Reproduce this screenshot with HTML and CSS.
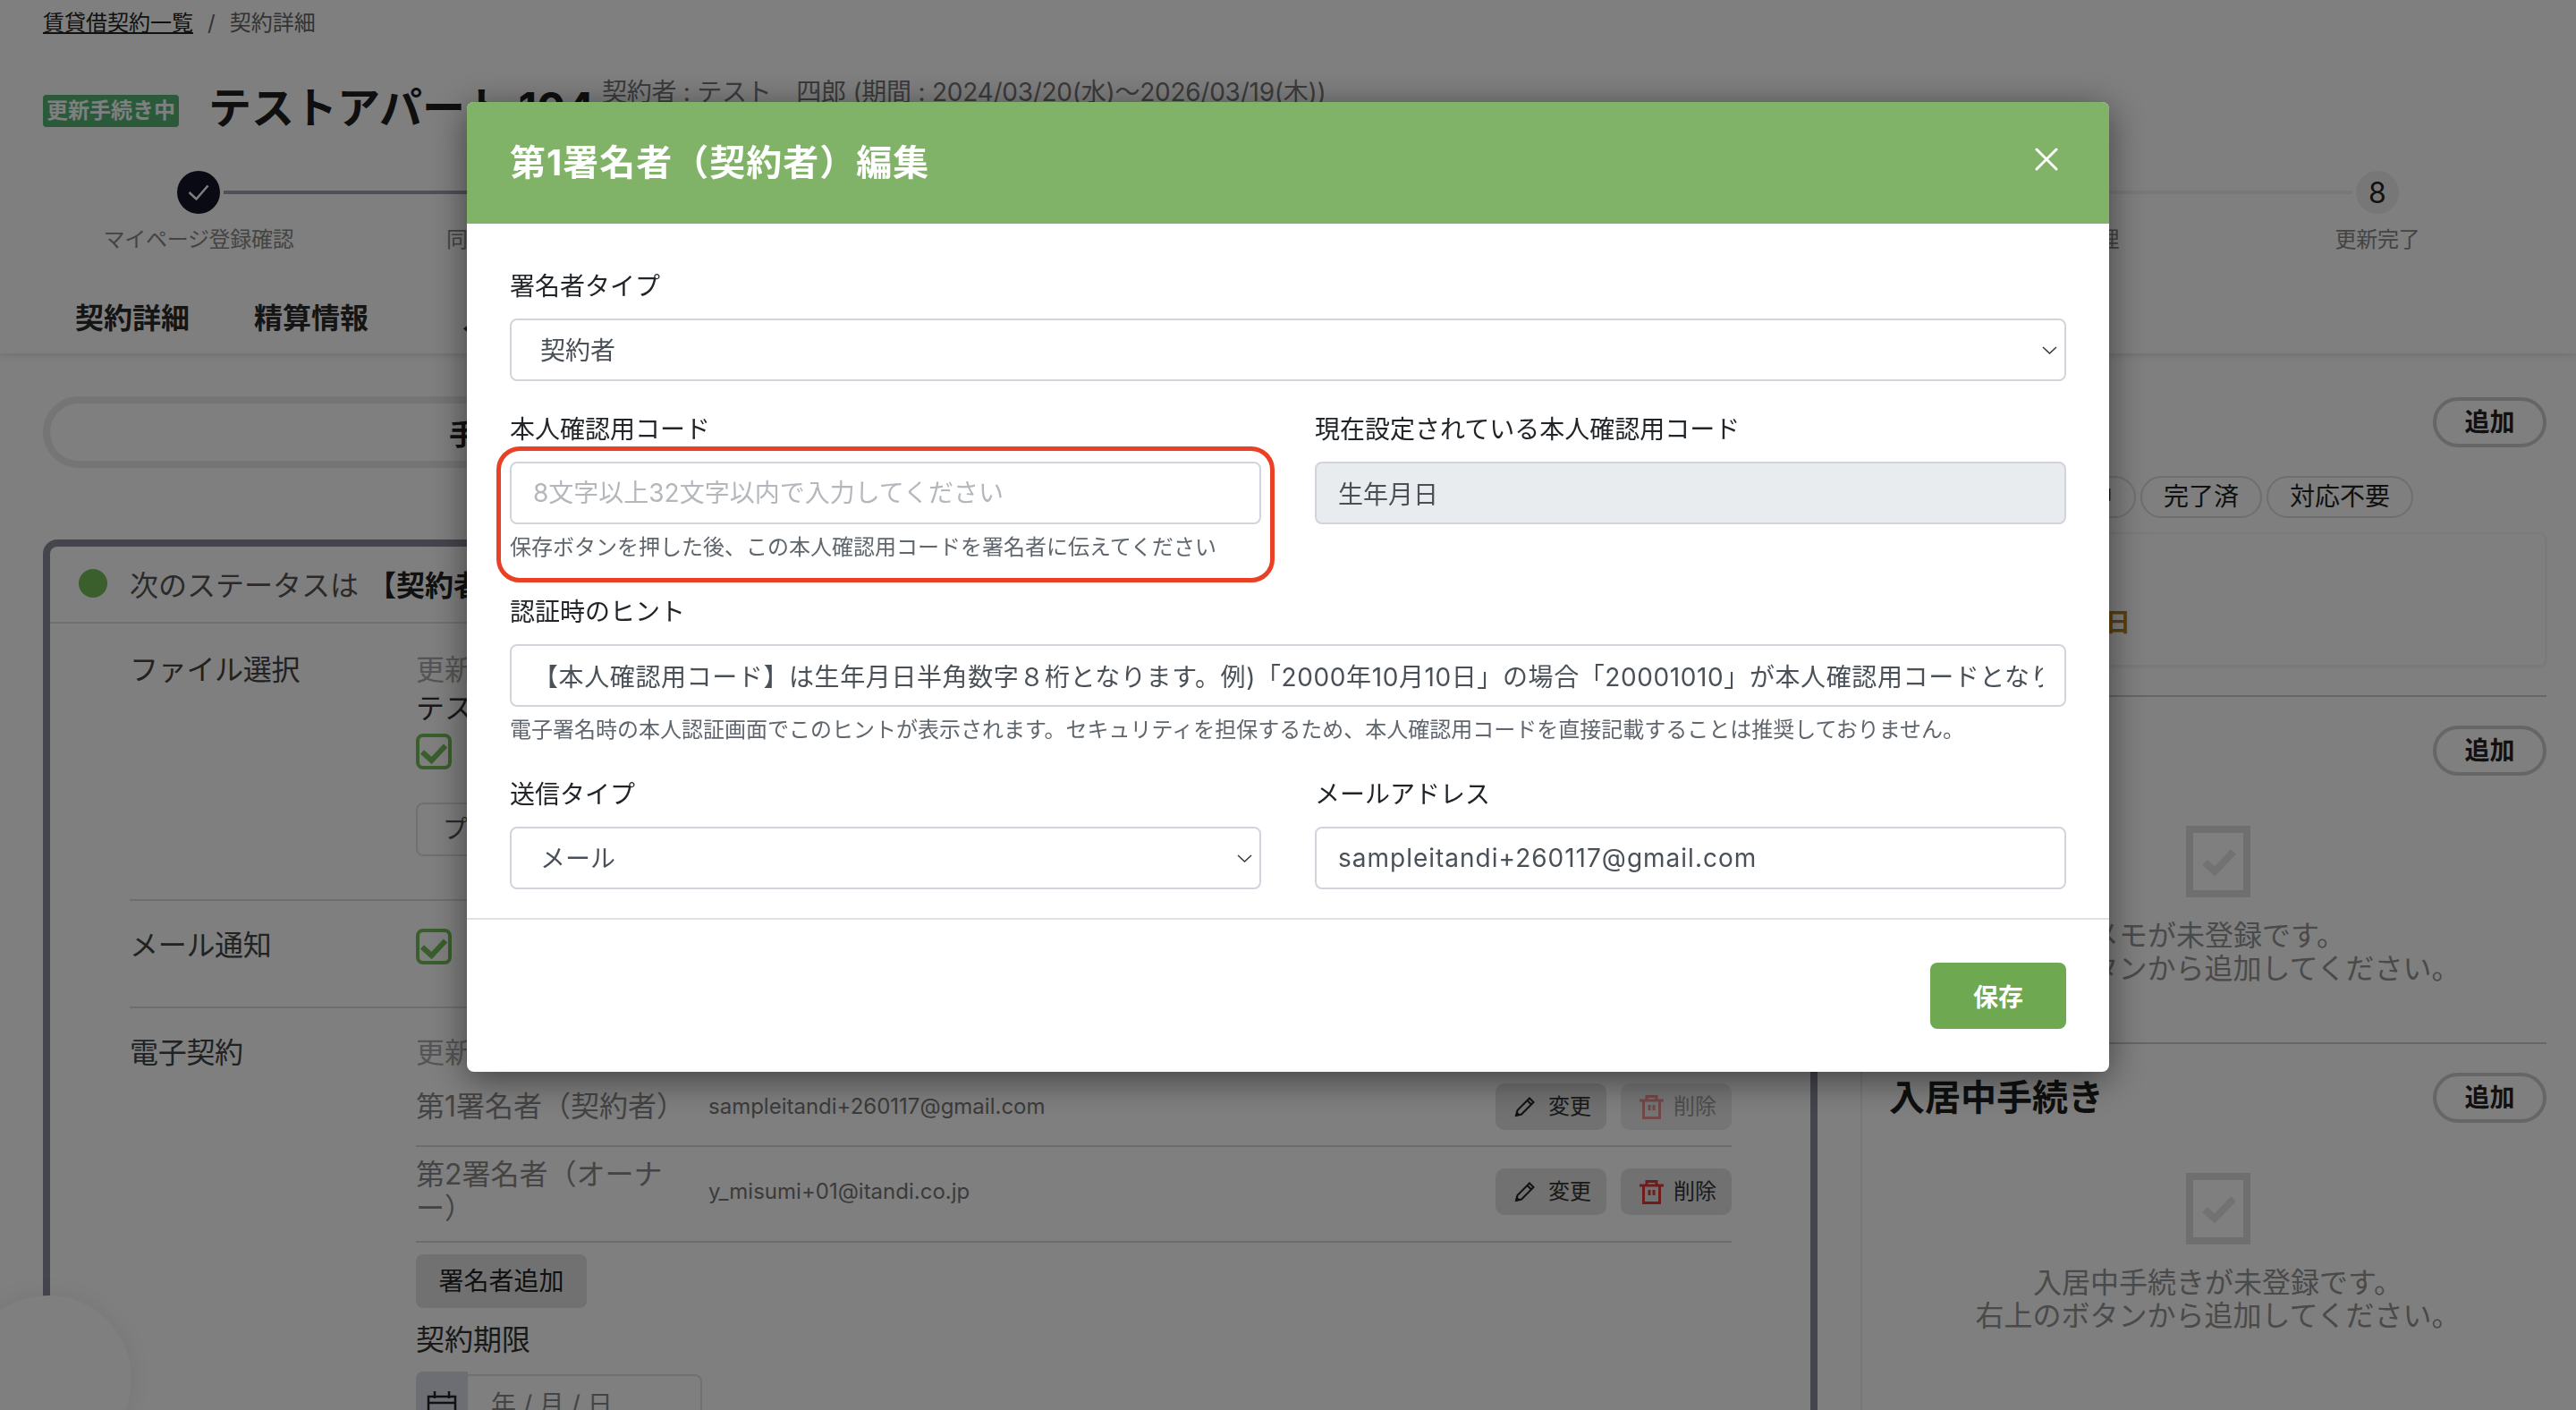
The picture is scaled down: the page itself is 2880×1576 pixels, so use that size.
FILE: index.html
```html
<!DOCTYPE html>
<html lang="ja">
<head>
<meta charset="utf-8">
<title>第1署名者（契約者）編集</title>
<link rel="stylesheet" href="styles.css">
</head>
<body>
<div class="page">
  <header class="top">
    <nav class="crumbs"><a class="crumb-link">賃貸借契約一覧</a><span class="crumb-sep">/</span><span>契約詳細</span></nav>
    <div class="title-row">
      <span class="badge">更新手続き中</span>
      <h1 class="prop-title">テストアパート 104</h1>
      <span class="prop-meta">契約者 : テスト　四郎 (期間 : 2024/03/20(水)〜2026/03/19(木))</span>
    </div>
    <ol class="steps">
      <li class="step done"><span class="step-dot"><svg viewBox="0 0 48 48" width="48" height="48"><path d="M13.5 24l8 7.5 13-15" fill="none" stroke="#fff" stroke-width="2.5"/></svg></span><span class="step-label">マイページ登録確認</span></li>
      <li class="step done"><span class="step-dot"></span><span class="step-label">同意書類確認</span></li>
      <li class="step"><span class="step-dot">3</span><span class="step-label">条件確認</span></li>
      <li class="step"><span class="step-dot">4</span><span class="step-label">書類確認</span></li>
      <li class="step"><span class="step-dot">5</span><span class="step-label">電子契約</span></li>
      <li class="step"><span class="step-dot">6</span><span class="step-label">入金確認</span></li>
      <li class="step"><span class="step-dot">7</span><span class="step-label">更新後処理</span></li>
      <li class="step last"><span class="step-dot">8</span><span class="step-label">更新完了</span></li>
    </ol>
    <div class="tabs"><span>契約詳細</span><span>精算情報</span><span class="tab-far">入居中手続き</span></div>
  </header>

  <main class="content">
    <section class="left">
      <div class="pill"><span class="pill-seg">手続き</span><span class="pill-seg">履歴</span></div>
      <div class="status-card">
        <div class="status-head"><span class="status-dot"></span><span>次のステータスは</span><b class="status-next">【契約者確認中】</b></div>
        <div class="status-body">
          <div class="row row-file">
            <div class="row-label">ファイル選択</div>
            <div>
              <div class="muted">更新契約書を選択してください</div>
              <div class="line-dark">テスト契約書.pdf</div>
              <span class="check"><svg viewBox="0 0 40 40" width="40" height="40"><path d="M7 20.5l10.500 9.500L33 13.500" fill="none" stroke="#74bc58" stroke-width="6"/></svg></span>
              <div class="preview">プレビュー</div>
            </div>
          </div>
          <div class="row row-mail">
            <div class="row-label">メール通知</div>
            <div class="mail-check"><span class="check"><svg viewBox="0 0 40 40" width="40" height="40"><path d="M7 20.5l10.500 9.500L33 13.500" fill="none" stroke="#74bc58" stroke-width="6"/></svg></span></div>
          </div>
          <div class="row row-sign">
            <div class="row-label">電子契約</div>
            <div>
              <div class="muted">更新契約書に署名します</div>
              <div class="signer">
                <div class="signer-name">第1署名者（契約者）</div>
                <div class="signer-mail">sampleitandi+260117@gmail.com</div>
                <div class="signer-actions">
                  <span class="mini-btn"><svg class="icon-pencil" viewBox="0 0 24 24" width="24" height="24"><path d="M2 22l1.500-6L17 2.500 21.500 7 8 20.500zM14.500 5L19 9.500" fill="none" stroke="#222" stroke-width="2"/><path d="M1 23l1.500-6 4.500 4.500z" fill="#222"/></svg>変更</span>
                  <span class="mini-btn off"><svg class="icon-trash" viewBox="0 0 27 27" width="27" height="27"><path d="M8 5.500V1.500h11v4M0 6h27M4.500 6v19.500h18V6M11 11v6M16 11v6" fill="none" stroke="#e03838" stroke-width="3"/></svg>削除</span>
                </div>
              </div>
              <div class="signer">
                <div class="signer-name">第2署名者（オーナ<br>ー）</div>
                <div class="signer-mail">y_misumi+01@itandi.co.jp</div>
                <div class="signer-actions">
                  <span class="mini-btn"><svg class="icon-pencil" viewBox="0 0 24 24" width="24" height="24"><path d="M2 22l1.500-6L17 2.500 21.500 7 8 20.500zM14.500 5L19 9.500" fill="none" stroke="#222" stroke-width="2"/><path d="M1 23l1.500-6 4.500 4.500z" fill="#222"/></svg>変更</span>
                  <span class="mini-btn"><svg class="icon-trash" viewBox="0 0 27 27" width="27" height="27"><path d="M8 5.500V1.500h11v4M0 6h27M4.500 6v19.500h18V6M11 11v6M16 11v6" fill="none" stroke="#e03838" stroke-width="3"/></svg>削除</span>
                </div>
              </div>
              <span class="add-signer">署名者追加</span>
              <div class="deadline-label">契約期限</div>
              <div class="date-field">
                <span class="date-addon"><svg viewBox="0 0 34 34" width="34" height="34"><path d="M2 7h30v25H2zM2 14h30M9 1v8M25 1v8" fill="none" stroke="#222" stroke-width="2.500"/></svg></span>
                <span class="date-text">年 / 月 / 日</span>
              </div>
            </div>
          </div>
        </div>
      </div>
    </section>

    <aside class="right">
      <section class="side-sec">
        <div class="side-head"><h2 class="side-title">対応メモ</h2><span class="add-btn">追加</span></div>
        <div class="chips"><span class="chip">すべて</span><span class="chip">対応中</span><span class="chip">完了済</span><span class="chip">対応不要</span></div>
        <div class="memo-card"><span class="memo-due">更新期限まで３日</span></div>
      </section>
      <section class="side-sec tall">
        <div class="side-head"><h2 class="side-title">申込メモ</h2><span class="add-btn">追加</span></div>
        <div class="empty">
          <svg class="empty-icon" viewBox="0 0 72 80" width="72" height="80"><path d="M4 4h64v72H4z" fill="none" stroke="#dedede" stroke-width="8"/><path d="M21 41l11 10 21-22" fill="none" stroke="#e4e4e4" stroke-width="8"/></svg>
          <p class="empty-text">メモが未登録です。<br>右上のボタンから追加してください。</p>
        </div>
      </section>
      <section class="side-sec tall final">
        <div class="side-head"><h2 class="side-title">入居中手続き</h2><span class="add-btn">追加</span></div>
        <div class="empty">
          <svg class="empty-icon" viewBox="0 0 72 80" width="72" height="80"><path d="M4 4h64v72H4z" fill="none" stroke="#dedede" stroke-width="8"/><path d="M21 41l11 10 21-22" fill="none" stroke="#e4e4e4" stroke-width="8"/></svg>
          <p class="empty-text">入居中手続きが未登録です。<br>右上のボタンから追加してください。</p>
        </div>
      </section>
    </aside>
  </main>
  <div class="chat-bubble"></div>
</div>

<div class="overlay">
  <div class="modal">
    <div class="modal-head">
      <h2 class="modal-title">第1署名者（契約者）編集</h2>
      <button class="modal-close" type="button" aria-label="閉じる"><svg viewBox="0 0 26 26" width="26" height="26"><path d="M2 2l22 22M24 2L2 24" fill="none" stroke="#fff" stroke-width="3" stroke-linecap="round"/></svg></button>
    </div>
    <div class="modal-body">
      <div class="field">
        <label class="label">署名者タイプ</label>
        <select class="control select"><option>契約者</option></select>
      </div>
      <div class="two-col gap-top">
        <div class="field">
          <label class="label">本人確認用コード</label>
          <div class="highlight-wrap">
            <input class="control" type="text" placeholder="8文字以上32文字以内で入力してください">
            <p class="help">保存ボタンを押した後、この本人確認用コードを署名者に伝えてください</p>
            <span class="highlight"></span>
          </div>
        </div>
        <div class="field">
          <label class="label">現在設定されている本人確認用コード</label>
          <input class="control readonly" type="text" value="生年月日" disabled>
        </div>
      </div>
      <div class="field gap-top">
        <label class="label">認証時のヒント</label>
        <input class="control hint" type="text" value="【本人確認用コード】は生年月日半角数字８桁となります。例)「2000年10月10日」の場合「20001010」が本人確認用コードとなります。">
        <p class="help">電子署名時の本人認証画面でこのヒントが表示されます。セキュリティを担保するため、本人確認用コードを直接記載することは推奨しておりません。</p>
      </div>
      <div class="two-col gap-top">
        <div class="field">
          <label class="label">送信タイプ</label>
          <select class="control select"><option>メール</option></select>
        </div>
        <div class="field">
          <label class="label">メールアドレス</label>
          <input class="control latin" type="text" value="sampleitandi+260117@gmail.com">
        </div>
      </div>
    </div>
    <div class="modal-foot"><button class="save" type="button">保存</button></div>
  </div>
</div>
</body>
</html>
```
FILE: styles.css
```css
* { box-sizing: border-box; }
html, body { margin: 0; padding: 0; }
body {
  font-family: "Inter", "Noto Sans CJK JP", sans-serif;
  color: #222;
  background: #fff;
  overflow: hidden;
}
h1, h2, p, ol { margin: 0; padding: 0; }

.page { height: 1576px; overflow: hidden; position: relative; background: #fefefe; }

/* top header */
.top { height: 395px; background: #fff; box-shadow: 0 2px 8px rgba(0,0,0,.12); padding: 8px 0 0 48px; position: relative; }
.crumbs { display: flex; gap: 16px; font-size: 24px; line-height: 36px; color: #666; }
.crumb-link { color: #222; text-decoration: underline; }
.title-row { display: flex; align-items: flex-start; margin-top: 47px; }
.badge { margin-top: 15px; width: 152px; height: 36px; border-radius: 4px; background: #54b474; color: #fff; font-size: 24px; font-weight: 700; line-height: 36px; text-align: center; white-space: nowrap; }
.prop-title { margin-left: 33px; font-size: 48px; line-height: 60px; font-weight: 700; white-space: nowrap; color: #1e1e1e; }
.prop-meta { margin: -8px 0 0 8px; font-size: 28px; line-height: 40px; letter-spacing: -.25px; color: #777; white-space: nowrap; }

.steps { display: flex; list-style: none; margin-top: 40px; width: 2784px; }
.step { flex: 0 0 348px; display: flex; flex-direction: column; align-items: center; position: relative; }
.step::after { content: ""; position: absolute; left: 202px; width: 292px; top: 22px; height: 4px; background: #f0f0f0; }
.step.done::after { background: #a0a0b0; }
.step.last::after { display: none; }
.step-dot { width: 48px; height: 48px; border-radius: 50%; background: #eee; display: flex; align-items: center; justify-content: center; font-size: 32px; color: #222; position: relative; }
.step.done .step-dot { background: #141428; }
.step-label { margin-top: 11px; font-size: 24px; line-height: 36px; letter-spacing: -.3px; color: #888; white-space: nowrap; }

.tabs { display: flex; gap: 72px; margin-top: 44px; padding-left: 36px; font-size: 32px; line-height: 48px; padding-top: 2px; font-weight: 700; color: #2a2a2a; white-space: nowrap; }
.tab-far { margin-left: 33px; }

/* body */
.content { display: flex; padding-left: 48px; gap: 48px; }
.left { flex: 0 0 1984px; }
.pill { margin-top: 48px; height: 80px; border: 8px solid #eaeaea; border-radius: 40px; display: grid; grid-template-columns: 1fr 1fr; align-items: center; font-size: 32px; font-weight: 700; color: #222; text-align: center; }
.pill-seg { padding-left: 4px; }
.status-card { margin-top: 80px; border: 8px solid #8a8a9a; border-bottom: 0; border-radius: 16px 16px 0 0; height: 1000px; }
.status-head { height: 86px; border-bottom: 2px solid #e0e0e0; display: flex; align-items: center; padding: 0 0 2px 32px; font-size: 32px; color: #555; white-space: nowrap; }
.status-dot { width: 32px; height: 32px; border-radius: 50%; background: #74bc58; margin-right: 25px; }
.status-next { margin-left: 10px; color: #222; }
.status-body { padding: 0 88px 0 89px; }
.row { display: grid; grid-template-columns: 320px 1fr; font-size: 32px; line-height: 44px; }
.row-label { padding-top: 2px; color: #444; letter-spacing: -.3px; }
.row-file { padding: 28px 0 48px; border-bottom: 2px solid #ddd; }
.row-mail { padding: 26px 0 46px; border-bottom: 2px solid #ddd; }
.row-sign { padding-top: 28px; }
.row-sign .row-label { padding-top: 0; }
.muted { color: #aaa; }
.row-file .muted { padding-top: 2px; }
.line-dark { margin-top: -1px; color: #333; }
.check { display: block; width: 40px; height: 40px; border: 4px solid #74bc58; border-radius: 8px; margin-top: 6px; position: relative; overflow: hidden; }
.check svg { display: block; margin: -4px; }
.mail-check .check { margin-top: 5px; }
.preview { margin-top: 37px; width: 300px; height: 60px; border: 2px solid #e0e0e0; border-radius: 8px; padding-left: 28px; font-size: 28px; line-height: 56px; color: #555; }
.signer { display: grid; grid-template-columns: 327px 1fr auto; align-items: center; padding: 12px 0 17px; border-bottom: 2px solid #dadada; }
.signer-name { line-height: 38px; color: #888; white-space: nowrap; }
.signer-mail { font-size: 24px; line-height: 36px; color: #777; }
.signer-actions { display: flex; gap: 16px; }
.mini-btn { display: flex; align-items: center; width: 124px; height: 52px; padding-left: 21px; background: #e2e2e2; border-radius: 10px; font-size: 24px; color: #333; white-space: nowrap; }
.mini-btn.off { color: #999; background: #eaeaea; }
.mini-btn.off svg { opacity: .5; }
.icon-pencil { margin-right: 14px; }
.icon-trash { margin-right: 11px; }
.add-signer { display: block; width: 191px; height: 60px; margin-top: 13px; background: #e2e2e2; border-radius: 8px; font-size: 28px; line-height: 60px; text-align: center; color: #222; }
.deadline-label { margin-top: 14px; color: #333; }
.date-field { display: flex; width: 320px; height: 70px; margin-top: 16px; border: 2px solid #e0e0e0; border-radius: 8px; }
.date-addon { width: 58px; margin: -5px 0 -2px -2px; background: #d8dce6; border-radius: 8px 0 0 8px; display: flex; justify-content: center; padding-top: 21px; }
.date-text { margin-left: 26px; padding-top: 8px; font-size: 28px; line-height: 48px; color: #888; white-space: nowrap; }

.right { flex: 1; border-left: 2px solid #eee; padding: 17px 33px 0 30px; min-width: 0; }
.side-sec { padding: 32px 0; border-bottom: 2px solid #ccc; }
.side-sec.tall { padding-bottom: 64px; }
.side-sec.final { border-bottom: 0; }
.side-head { display: flex; justify-content: space-between; align-items: center; height: 56px; }
.side-title { font-size: 40px; line-height: 56px; font-weight: 700; color: #1e1e1e; white-space: nowrap; }
.add-btn { width: 127px; height: 56px; border: 4px solid #ccc; border-radius: 28px; font-size: 28px; font-weight: 700; line-height: 48px; text-align: center; color: #222; }
.chips { display: flex; gap: 5px; margin-top: 32px; padding-left: 2px; }
.chip { height: 47px; padding: 0 24px; border: 2px solid #ddd; border-radius: 24px; font-size: 28px; line-height: 43px; color: #222; white-space: nowrap; }
.memo-card { margin-top: 16px; height: 150px; padding: 79px 0 0 44px; border: 2px solid #f4f4f4; border-radius: 8px; box-shadow: 0 1px 3px rgba(0,0,0,.08); }
.memo-due { font-size: 28px; line-height: 40px; font-weight: 700; color: #b48020; white-space: nowrap; }
.empty { margin-top: 56px; text-align: center; }
.empty-icon { display: block; margin: 0 auto; }
.empty-text { margin-top: 24px; font-size: 32px; line-height: 37px; color: #949494; white-space: nowrap; }

.chat-bubble { position: absolute; left: -39px; top: 1448px; width: 186px; height: 186px; border-radius: 50%; background: #fff; box-shadow: 0 0 24px rgba(0,0,0,.08); }

/* modal */
.overlay { position: fixed; inset: 0; z-index: 10; background: rgba(0,0,0,.5); display: flex; justify-content: center; align-items: flex-start; padding-top: 114px; }
.modal { width: 1836px; background: #fff; border-radius: 8px; box-shadow: 0 8px 40px rgba(0,0,0,.5); color: #212529; }
.modal-head { height: 136px; background: #80b367; border-radius: 8px 8px 0 0; display: flex; justify-content: space-between; align-items: center; padding: 0 57px 0 48px; }
.modal-title { font-size: 40px; line-height: 60px; font-weight: 700; letter-spacing: 1px; color: #fff; white-space: nowrap; }
.modal-close { width: 26px; height: 26px; padding: 0; border: 0; background: none; margin-top: -8px; cursor: pointer; }
.modal-close svg { display: block; }
.modal-body { padding: 48px 48px 32px; }
.gap-top { margin-top: 32px; }
.two-col { display: grid; grid-template-columns: 840px 840px; gap: 60px; }
.field { display: block; min-width: 0; }
.label { display: block; padding-top: 2px; font-size: 28px; line-height: 40px; margin-bottom: 16px; color: #212529; }
.control { display: block; width: 100%; height: 70px; padding: 0 24px; border: 2px solid #d1d5db; border-radius: 8px; background: #fff; font: inherit; font-size: 28px; color: #495057; outline: none; }
.control::placeholder { color: #b4b7bc; opacity: 1; }
.control.readonly { background: #e9ecef; color: #495057; -webkit-text-fill-color: #495057; opacity: 1; }
.control.hint { letter-spacing: .6px; }
.control.latin { letter-spacing: 1px; }
.select { appearance: none; -webkit-appearance: none; padding-left: 32px; padding-top: 2px; padding-right: 40px; background-image: url("data:image/svg+xml,%3Csvg xmlns='http://www.w3.org/2000/svg' viewBox='0 0 17 9'%3E%3Cpath d='M1 1l7.500 7L16 1' fill='none' stroke='%23343a40' stroke-width='1.500'/%3E%3C/svg%3E"); background-repeat: no-repeat; background-position: right 8px center; background-size: 17px 9px; }
.help { margin-top: 8px; font-size: 24px; line-height: 36px; color: #5f666d; white-space: nowrap; }
.highlight-wrap { position: relative; }
.highlight { position: absolute; left: -15px; right: -15px; top: -17px; bottom: -21px; border: 5px solid #ea4025; border-radius: 26px; pointer-events: none; }
.modal-foot { border-top: 2px solid #dee2e6; padding: 48px 48px 48px; display: flex; justify-content: flex-end; }
.save { width: 152px; height: 74px; border: 0; border-radius: 8px; background: #6ea850; color: #fff; font: inherit; font-size: 28px; font-weight: 700; cursor: pointer; }
```
